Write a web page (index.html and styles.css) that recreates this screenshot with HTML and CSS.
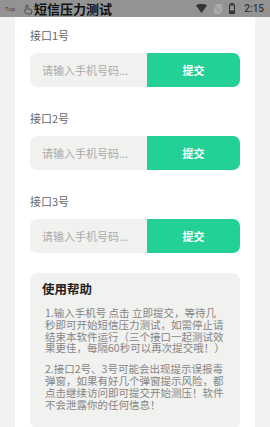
FILE: index.html
```html
<!DOCTYPE html>
<html lang="zh-CN">
<head>
  <meta charset="UTF-8">
  <title>短信压力测试</title>
  <link rel="stylesheet" href="styles.css">
</head>
<body>
  <div class="status">
    <span class="top">Top</span>
    <svg class="hand" width="10" height="11" viewBox="0 0 10 11">
      <path d="M3 6V2a1 1 0 0 1 2 0v3l3 .6a1 1 0 0 1 .8 1.1L8.3 10H3.6L1.3 7.4a.9.9 0 0 1 1.3-1.2z" fill="none" stroke="#444" stroke-width="0.9"/>
    </svg>
    <span class="title">短信压力测试</span>
    <span class="spacer"></span>
    <svg class="ico" width="11" height="9" viewBox="0 0 11 9"><path d="M0 1.5Q5.5-2 11 1.5L5.5 9z" fill="#333"/></svg>
    <svg class="ico" width="8" height="10" viewBox="0 0 8 10"><path d="M2 0h6v10H0V2z" fill="#aaa"/><path d="M0 1l8 9" stroke="#888" stroke-width="0.8"/></svg>
    <svg class="ico" width="6" height="11" viewBox="0 0 6 11"><rect x="1.5" y="0" width="3" height="1.5" fill="#333"/><rect x="0" y="1.3" width="6" height="9.7" rx="0.6" fill="#333"/><rect x="1.2" y="2.5" width="3.6" height="5" fill="#999"/></svg>
    <span class="clock">2:15</span>
  </div>

  <div class="page">
    <div class="label">接口1号</div>
    <div class="row">
      <input type="text" placeholder="请输入手机号码...">
      <button>提交</button>
    </div>

    <div class="label">接口2号</div>
    <div class="row">
      <input type="text" placeholder="请输入手机号码...">
      <button>提交</button>
    </div>

    <div class="label">接口3号</div>
    <div class="row">
      <input type="text" placeholder="请输入手机号码...">
      <button>提交</button>
    </div>

    <div class="help">
      <h2>使用帮助</h2>
      <p>1.输入手机号 点击 立即提交，等待几秒即可开始短信压力测试，如需停止请结束本软件运行（三个接口一起测试效果更佳，每隔60秒可以再次提交哦！）</p>
      <p>2.接口2号、3号可能会出现提示误报毒弹窗，如果有好几个弹窗提示风险，都点击继续访问即可提交开始测压！软件不会泄露你的任何信息！</p>
    </div>
  </div>
</body>
</html>
```

FILE: styles.css
```css
body { margin: 0; height: 427px; overflow: hidden; background: #f2f2f2; font-family: "Noto Sans CJK SC", "Noto Sans", sans-serif; }
.status { height: 17px; background: #939393; display: flex; align-items: center; padding: 0 6px 0 5px; }
.top { font-family: Roboto, sans-serif; font-size: 6px; color: #444; margin-right: 8px; }
.hand { margin-right: 1px; margin-top: 1px; }
.title { font-size: 13px; font-weight: bold; color: #111; line-height: 15px; }
.spacer { flex: 1; }
.ico { margin-right: 7px; }
.clock { font-family: Roboto, sans-serif; font-size: 10px; color: #333; font-weight: 500; margin-left: 2px; }

.page { margin: 0 15px; background: #fff; padding: 11px 15px 0; height: 399px; overflow: hidden; }
.label { font-size: 11px; line-height: 14px; color: #666; }
.row { display: flex; height: 34px; margin: 11px 0 24px; }
.row input { flex: 1; min-width: 0; border: none; outline: none; background: #f1f2f0; border-radius: 7px 0 0 7px; padding: 0 0 0 12px; font-family: inherit; font-size: 11px; }
.row input::placeholder { color: #aaa; }
.row button { width: 93px; border: none; background: #23d196; color: #fff; font-family: inherit; font-size: 11px; font-weight: bold; border-radius: 0 7px 7px 0; }

.help { margin-top: -4px; background: #f1f1ef; border-radius: 7px; padding: 7px 15px 18px; }
.help h2 { margin: 0 0 0 -3px; font-size: 12.5px; line-height: 17px; color: #222; }
.help p { margin: 10px 0 0; font-size: 10.5px; line-height: 11.8px; color: #858585; }
.help p + p { margin-top: 9px; }
```
